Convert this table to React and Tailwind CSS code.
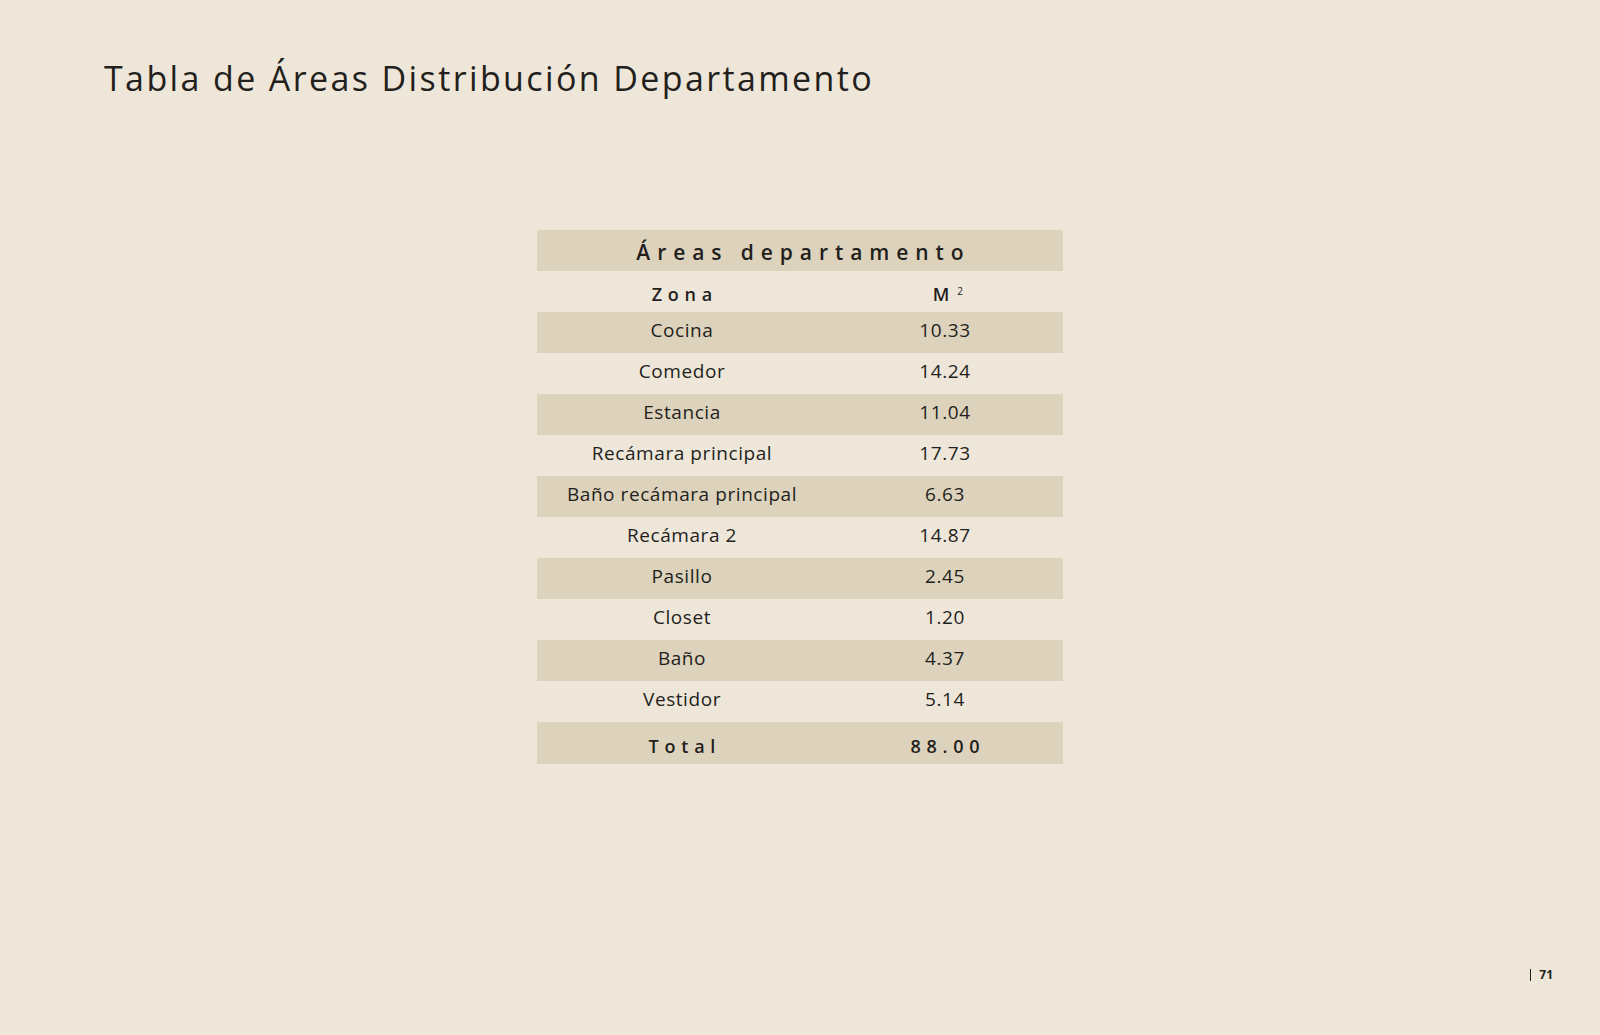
const rows = [
  ['Cocina', '10.33'],
  ['Comedor', '14.24'],
  ['Estancia', '11.04'],
  ['Recámara principal', '17.73'],
  ['Baño recámara principal', '6.63'],
  ['Recámara 2', '14.87'],
  ['Pasillo', '2.45'],
  ['Closet', '1.20'],
  ['Baño', '4.37'],
  ['Vestidor', '5.14'],
]

export default function App() {
  return (
    <div
      className="relative w-full h-[1035px] bg-[#efe6da] text-[#231f1c] overflow-hidden"
      style={{ fontFamily: '"Open Sans", "Noto Sans", sans-serif' }}
    >
      {/* Title */}
      <div className="pl-[104px] pt-[56px]">
        <h1 className="text-[34px] leading-[44px] font-medium tracking-[0.07em]">
          Tabla de Áreas Distribución Departamento
        </h1>
      </div>

      {/* Table */}
      <div className="mx-auto mt-[130px] w-[526px]">
        <div className="h-[41px] bg-[#ddd3bd] flex items-center justify-center pt-[5px] text-[21px] font-semibold tracking-[0.33em] pl-[0.33em]">
          Áreas departamento
        </div>
        <div className="h-[41px] grid grid-cols-[290px_236px] items-center pt-[5px] text-[18px] font-semibold tracking-[0.32em]">
          <div className="text-center pl-[0.32em]">Zona</div>
          <div className="text-center pl-[0.32em]">
            M<sup className="text-[10px] font-medium tracking-normal ml-[2px] -top-[0.6em]">2</sup>
          </div>
        </div>
        {rows.map(([zona, m2], i) => (
          <div
            key={zona}
            className={`h-[41px] grid grid-cols-[290px_236px] items-center pb-[4px] text-[19px] tracking-[0.03em] ${
              i % 2 === 0 ? 'bg-[#ddd3bd]' : ''
            }`}
          >
            <div className="text-center">{zona}</div>
            <div className="text-center">{m2}</div>
          </div>
        ))}
        <div className="h-[42px] bg-[#ddd3bd] grid grid-cols-[290px_236px] items-center pt-[6px] text-[18px] font-semibold tracking-[0.32em]">
          <div className="text-center pl-[0.32em]">Total</div>
          <div className="text-center pl-[0.32em]">88.00</div>
        </div>
      </div>

      {/* Page number */}
      <div className="absolute right-[47px] bottom-[51px] flex items-center gap-[8px] text-[12px] font-bold">
        <span className="w-[1.5px] h-[12px] bg-[#231f1c]" />
        <span>71</span>
      </div>
    </div>
  )
}
